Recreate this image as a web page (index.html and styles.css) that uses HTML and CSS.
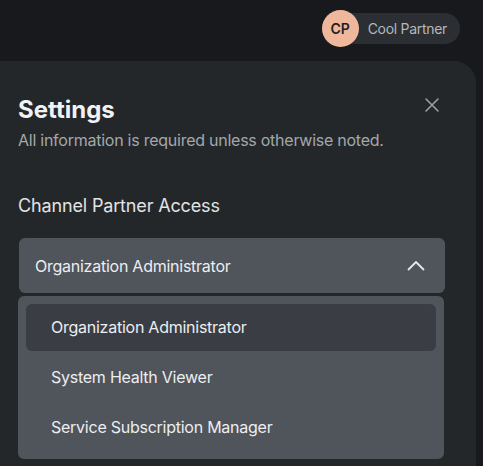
FILE: index.html
```html
<!DOCTYPE html>
<html>
  <head>
    <title>Settings</title>
    <meta charset="UTF-8">
    <link rel="stylesheet" href="styles.css">
  </head>

  <body>
    <div class="topbar">
      <div class="user-pill">
        <span class="avatar">CP</span>
        <span class="user-name">Cool Partner</span>
      </div>
    </div>

    <div class="panel">
      <div class="panel-header">
        <div>
          <h1>Settings</h1>
          <p class="subtitle">All information is required unless otherwise noted.</p>
        </div>
        <button class="close" type="button" aria-label="Close">
          <svg width="16" height="16" viewBox="0 0 16 16">
            <path d="M2 2 L14 14 M14 2 L2 14" stroke="#9a9ea3" stroke-width="1.6" stroke-linecap="round" fill="none"/>
          </svg>
        </button>
      </div>

      <label class="field-label">Channel Partner Access</label>
      <div class="select">
        <span>Organization Administrator</span>
        <svg width="18" height="11" viewBox="0 0 18 11">
          <path d="M1.5 9.5 L9 2 L16.5 9.5" stroke="#e6e7e9" stroke-width="1.8" stroke-linecap="round" stroke-linejoin="round" fill="none"/>
        </svg>
      </div>
      <ul class="options">
        <li class="option active">Organization Administrator</li>
        <li class="option">System Health Viewer</li>
        <li class="option">Service Subscription Manager</li>
      </ul>
    </div>
  </body>
</html>
```

FILE: styles.css
```css
body {
  font-family: Inter, "Noto Sans", sans-serif;
  margin: 0;
  padding: 0;
  background-color: #17191c;
  width: 483px;
  height: 466px;
  overflow: hidden;
}

.topbar {
  display: flex;
  justify-content: flex-end;
  padding: 12px 23px 0 0;
  height: 49px;
  box-sizing: border-box;
}

.user-pill {
  display: flex;
  align-items: center;
  height: 31px;
  margin-top: 1px;
  padding-right: 13px;
  background-color: #2b2e32;
  border-radius: 16px;
}

.avatar {
  width: 37px;
  height: 37px;
  border-radius: 50%;
  background-color: #efb89c;
  color: #1d1f22;
  font-size: 14px;
  font-weight: 600;
  display: flex;
  align-items: center;
  justify-content: center;
  margin-right: 9px;
}

.user-name {
  color: #b4b8bc;
  font-size: 14px;
  letter-spacing: -0.3px;
}

.panel {
  margin-top: 12px;
  width: 476px;
  height: 420px;
  background-color: #24272a;
  border-radius: 0 22px 0 0;
  padding: 34px 36px 0 18px;
  box-sizing: border-box;
}

.panel-header {
  display: flex;
  justify-content: space-between;
  align-items: flex-start;
}

h1 {
  margin: 0;
  font-size: 24px;
  font-weight: 700;
  color: #f1f2f3;
  line-height: 30px;
}

.subtitle {
  margin: 4px 0 0;
  font-size: 16px;
  color: #a3a7ab;
  line-height: 22px;
  letter-spacing: -0.25px;
}

.close {
  background: none;
  border: none;
  padding: 0;
  margin-top: 2px;
  cursor: pointer;
}

.field-label {
  display: block;
  margin-top: 43px;
  font-size: 18px;
  color: #e2e3e5;
  line-height: 24px;
  letter-spacing: -0.15px;
}

.select {
  margin-top: 20px;
  height: 55px;
  width: 426px;
  margin-left: 1px;
  background-color: #50545b;
  border-radius: 6px;
  display: flex;
  align-items: center;
  justify-content: space-between;
  padding: 0 20px 0 16px;
  box-sizing: border-box;
  font-size: 16px;
  color: #eceef0;
  letter-spacing: -0.25px;
}

.options {
  list-style: none;
  margin: 3px 0 0;
  padding: 8px;
  width: 426px;
  box-sizing: border-box;
  background-color: #50545b;
  border-radius: 6px;
}

.option {
  height: 47px;
  line-height: 47px;
  padding-left: 25px;
  font-size: 16px;
  color: #eceef0;
  border-radius: 6px;
  letter-spacing: -0.25px;
}

.option + .option {
  margin-top: 3px;
}

.option.active {
  background-color: #3a3d44;
}
```
